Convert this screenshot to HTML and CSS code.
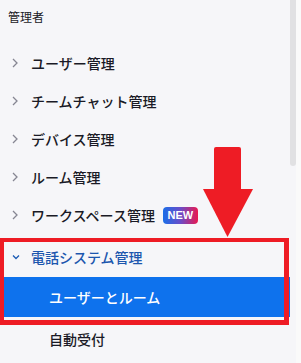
FILE: index.html
```html
<!DOCTYPE html>
<html lang="ja">
<head>
<meta charset="utf-8">
<link rel="stylesheet" href="styles.css">
</head>
<body>
<div class="page">
  <nav class="sidebar">
    <div class="section-title">管理者</div>
    <ul class="menu">
      <li class="item"><svg class="chev" width="6" height="10" viewBox="0 0 6 10"><polyline points="1,1 5,5 1,9"/></svg><span>ユーザー管理</span></li>
      <li class="item"><svg class="chev" width="6" height="10" viewBox="0 0 6 10"><polyline points="1,1 5,5 1,9"/></svg><span>チームチャット管理</span></li>
      <li class="item"><svg class="chev" width="6" height="10" viewBox="0 0 6 10"><polyline points="1,1 5,5 1,9"/></svg><span>デバイス管理</span></li>
      <li class="item"><svg class="chev" width="6" height="10" viewBox="0 0 6 10"><polyline points="1,1 5,5 1,9"/></svg><span>ルーム管理</span></li>
      <li class="item"><svg class="chev" width="6" height="10" viewBox="0 0 6 10"><polyline points="1,1 5,5 1,9"/></svg><span>ワークスペース管理</span><span class="badge">NEW</span></li>
      <li class="item open"><svg class="chev-down" width="8" height="6" viewBox="0 0 8 6"><polyline points="1,1.5 4,4.5 7,1.5"/></svg><span>電話システム管理</span></li>
      <li class="sub selected">ユーザーとルーム</li>
      <li class="sub">自動受付</li>
    </ul>
  </nav>
  <div class="scroll-thumb"></div>
  <div class="edge"></div>
  <div class="annot-box"></div>
  <svg class="annot-arrow" width="50" height="90" viewBox="0 0 50 90">
    <rect x="11" y="0" width="27" height="44" rx="2" fill="#ee1c25"/>
    <polygon points="0,42 50,42 24.5,90" fill="#ee1c25"/>
  </svg>
</div>
</body>
</html>
```

FILE: styles.css
```css
* { box-sizing: border-box; }
html, body {
  margin: 0;
  padding: 0;
}
body {
  background: #f6f6f9;
  font-family: "Noto Sans CJK JP", "Noto Sans", sans-serif;
  color: #1a1a26;
}
.page {
  position: relative;
  width: 301px;
  height: 363px;
  overflow: hidden;
}
.sidebar {
  width: 290px;
}
.section-title {
  height: 34px;
  line-height: 34px;
  padding-left: 8px;
  font-size: 12px;
}
.menu {
  list-style: none;
  margin: 10px 0 0 0;
  padding: 0;
}
.item {
  height: 38px;
  display: flex;
  align-items: center;
  padding-left: 12px;
  font-size: 14px;
  font-weight: 500;
}
.item .chev {
  width: 6px;
  height: 10px;
  margin-right: 13px;
  fill: none;
  stroke: #868693;
  stroke-width: 1.3;
}
.item .chev-down {
  width: 8px;
  height: 6px;
  margin-right: 11px;
  fill: none;
  stroke: #1c5bb4;
  stroke-width: 1.3;
}
.item.open {
  margin-top: 4px;
  color: #1c56ae;
}
.badge {
  margin-left: 8px;
  height: 17px;
  width: 35px;
  border-radius: 4px;
  background: linear-gradient(90deg, #1a6ee8 0%, #6a4cc8 50%, #ea1850 100%);
  color: #fff;
  font-family: "Liberation Sans", Arial, sans-serif;
  font-weight: 700;
  font-size: 11px;
  line-height: 17px;
  text-align: center;
}
.sub {
  display: flex;
  align-items: center;
  padding-left: 49px;
  font-size: 14px;
  font-weight: 500;
  height: 38px;
  margin-top: 3px;
}
.sub.selected {
  height: 40px;
  margin-top: 1px;
  background: #0e72ed;
  color: #fff;
}
.scroll-thumb {
  position: absolute;
  left: 290px;
  top: 0;
  width: 6px;
  height: 166px;
  background: #e1e1e3;
  border-radius: 0 0 3px 3px;
}
.edge {
  position: absolute;
  left: 296px;
  top: 0;
  width: 5px;
  height: 363px;
  background: #fafafa;
}
.annot-box {
  position: absolute;
  left: 0;
  top: 238px;
  width: 289px;
  height: 87px;
  border-style: solid;
  border-color: #ee1c25;
  border-width: 4px 5px 5px 4px;
}
.annot-arrow {
  position: absolute;
  left: 203px;
  top: 147px;
}
```
